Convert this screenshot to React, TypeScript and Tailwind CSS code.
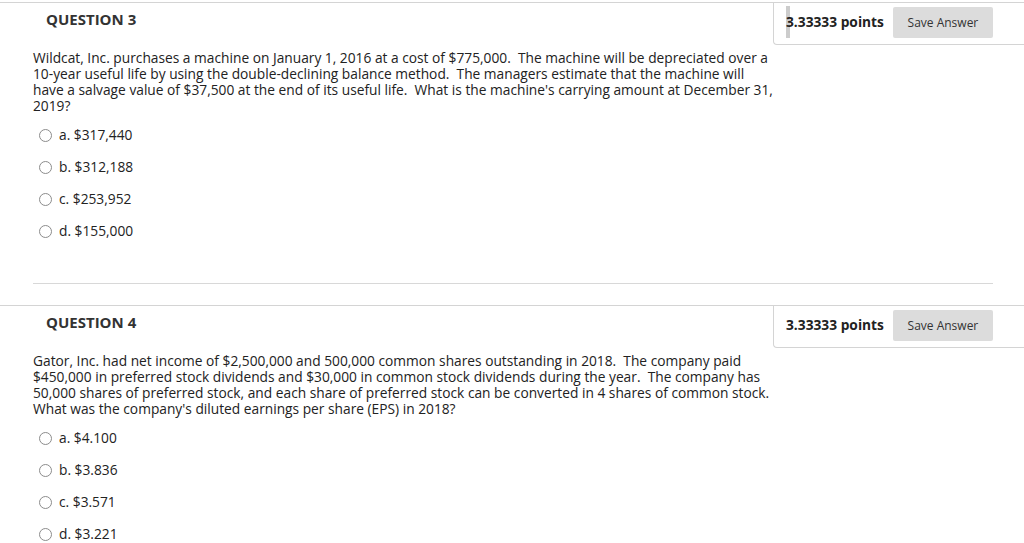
import React from "react";

type Q = {
  num: number;
  lines: string[];
  options: string[];
  highlight?: boolean;
};

const questions: Q[] = [
  {
    num: 3,
    highlight: true,
    lines: [
      "Wildcat, Inc. purchases a machine on January 1, 2016 at a cost of $775,000.\u00a0 The machine will be depreciated over a",
      "10-year useful life by using the double-declining balance method.\u00a0 The managers estimate that the machine will",
      "have a salvage value of $37,500 at the end of its useful life.\u00a0 What is the machine's carrying amount at December 31,",
      "2019?",
    ],
    options: ["a. $317,440", "b. $312,188", "c. $253,952", "d. $155,000"],
  },
  {
    num: 4,
    lines: [
      "Gator, Inc. had net income of $2,500,000 and 500,000 common shares outstanding in 2018.\u00a0 The company paid",
      "$450,000 in preferred stock dividends and $30,000 in common stock dividends during the year.\u00a0 The company has",
      "50,000 shares of preferred stock, and each share of preferred stock can be converted in 4 shares of common stock.",
      "What was the company's diluted earnings per share (EPS) in 2018?",
    ],
    options: ["a. $4.100", "b. $3.836", "c. $3.571", "d. $3.221"],
  },
];

function Question({ q }: { q: Q }) {
  return (
    <div className="border-t border-[#d4d4d4]">
      <div className="flex items-start justify-between h-[42px]">
        <div className="pl-[46px] pt-[6px] text-[15px] leading-[20px] font-bold text-[#333333]">
          QUESTION {q.num}
        </div>
        <div className="w-[251px] h-[42px] border-l border-b border-[#d4d4d4] rounded-bl-[4px] flex items-start pt-[4px] pl-[12px]">
          <div className="relative h-[31px] flex items-center text-[13.75px] font-bold text-[#222222]">
            {q.highlight && (
              <span className="absolute left-0 top-[-1px] w-[4px] h-[32px] bg-[#cccccc]" />
            )}
            <span className="relative">3.33333 points</span>
          </div>
          <button className="ml-[9px] w-[100px] h-[31px] bg-[#dcdcdc] rounded-[2px] text-[12px] text-[#333333] flex items-center justify-center">
            Save Answer
          </button>
        </div>
      </div>
      <div className="pl-[33px] mt-[5px] text-[13.75px] leading-[16px] text-[#222222]">
        {q.lines.map((l, i) => (
          <div key={i} className="whitespace-nowrap">
            {l}
          </div>
        ))}
      </div>
      <div className="pl-[39px] mt-[13px] flex flex-col gap-[16px]">
        {q.options.map((o) => (
          <div key={o} className="flex items-center h-[16px]">
            <span className="w-[13px] h-[13px] rounded-full border border-[#8c8c8c] bg-white shrink-0" />
            <span className="ml-[7px] text-[13.75px] leading-[16px] text-[#222222]">{o}</span>
          </div>
        ))}
      </div>
    </div>
  );
}

export default function App() {
  return (
    <div
      className="w-[1024px] h-[543px] overflow-hidden bg-white pt-[2px]"
      style={{ fontFamily: '"Open Sans", "Noto Sans", sans-serif' }}
    >
      <Question q={questions[0]} />
      <div className="ml-[33px] w-[960px] mt-[44px] border-t border-[#d8d8d8]" />
      <div className="mt-[21px]">
        <Question q={questions[1]} />
      </div>
    </div>
  );
}
